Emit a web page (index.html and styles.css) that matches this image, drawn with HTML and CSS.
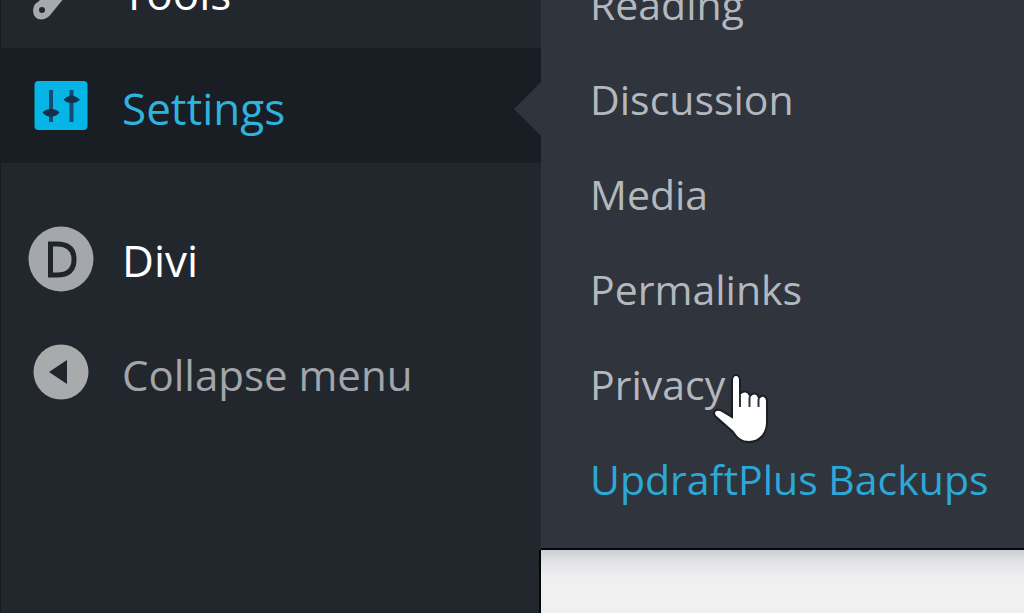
FILE: index.html
```html
<!DOCTYPE html>
<html lang="en">
<head>
<meta charset="utf-8">
<title>Settings</title>
<link rel="stylesheet" href="styles.css">
</head>
<body>
<div class="admin">
  <nav class="sidebar" aria-label="Main menu">
    <ul class="menu">
      <li><a class="menu-item" href="#">
        <svg class="icon" viewBox="0 0 70 70" aria-hidden="true"><path fill="#a7aaad" fill-rule="evenodd" d="M8 48Q5 57 12 61Q20 63 25 56L43 34L60 30L64 12L52 22L44 16L52 5L34 10L30 26L12 44Q9 45 8 48ZM19 52A3 3 0 1 0 13 52A3 3 0 1 0 19 52Z"/></svg>
        <span>Tools</span></a></li>
      <li><a class="menu-item current" href="#" aria-current="page">
        <svg class="icon" viewBox="0 0 70 70" aria-hidden="true"><rect x="8.500" y="8" width="53" height="49" rx="4" fill="#05b5e6"/><path stroke="#164a70" stroke-width="4" d="M25 17V49M45.500 17V49"/><path fill="#17304a" d="M16.500 39.500Q19 36 25 36T33.500 39.500Q31 43 25 44Q19 43 16.500 39.500ZM37.500 26.500Q40 24 45.500 22Q51 24 54 26.500Q51 30 45.500 30T37.500 26.500Z"/></svg>
        <span>Settings</span></a></li>
      <li class="separator" role="separator"></li>
      <li><a class="menu-item" href="#">
        <svg class="icon" viewBox="0 0 70 70" aria-hidden="true"><circle cx="35" cy="34" r="32.500" fill="#a4a8ae"/><path d="M24.500 19H31C42 19 48 24 48 34.500S42 50 31 50H24.500Z" fill="none" stroke="#20252c" stroke-width="5"/></svg>
        <span>Divi</span></a></li>
      <li><button class="menu-item collapse" type="button">
        <svg class="icon" viewBox="0 0 70 70" aria-hidden="true"><circle cx="35" cy="32" r="27.500" fill="#a9aaac"/><path d="M23 32L41 20V44Z" fill="#20252c"/></svg>
        <span>Collapse menu</span></button></li>
    </ul>
  </nav>
  <main class="content">
    <ul class="submenu">
      <li><a href="#">Reading</a></li>
      <li><a href="#">Discussion</a></li>
      <li><a href="#">Media</a></li>
      <li><a href="#">Permalinks</a></li>
      <li><a class="pointed" href="#">Privacy
        <svg class="cursor" viewBox="0 0 60 74" aria-hidden="true"><path d="M20 9C20 1 28 1 28 9V22C31 18 37 19 38 24C41 20 46 21 47 26C50 22 55 24 55 29V50C55 62 47 70 37 70C29 70 25 66 21 60L3 44C0 39 5 36 10 39L20 45Z" fill="#fff" stroke="#1b1e25" stroke-width="2"/><path d="M28 23V35M37.500 25V35M46.500 27V35" stroke="#30343c" stroke-width="2"/></svg></a></li>
      <li><a class="active" href="#">UpdraftPlus Backups</a></li>
    </ul>
    <div class="workspace"></div>
  </main>
</div>
</body>
</html>
```
FILE: styles.css
```css
* {
  box-sizing: border-box;
}

body {
  margin: 0;
  overflow: hidden;
  background: #f0f0f1;
  font-family: "Segoe UI", "Open Sans", "Noto Sans", sans-serif;
}

ul {
  margin: 0;
  padding: 0;
  list-style: none;
}

.admin {
  display: flex;
  height: 100vh;
  overflow: hidden;
}

.sidebar {
  flex: 0 0 541px;
  background: #22272e;
  border-left: 1px solid #191d23;
}

.menu {
  margin-top: -67px;
}

.menu-item {
  position: relative;
  display: flex;
  align-items: center;
  gap: 26px;
  width: 100%;
  height: 115px;
  padding: 4px 0 0 25px;
  border: 0;
  background: #22272e;
  color: #fff;
  font: inherit;
  font-size: 44px;
  line-height: 60px;
  text-align: left;
  text-decoration: none;
}

.icon {
  flex: none;
  width: 70px;
  height: 70px;
}

.menu-item.current {
  background: #191d24;
  color: #2eb3df;
}

.menu-item.current::after {
  content: "";
  position: absolute;
  top: 34px;
  right: 0;
  border: 27px solid transparent;
  border-right-color: #30343c;
  border-left-width: 0;
}

.menu-item.collapse {
  color: #a2a5a9;
  font-size: 42px;
}

.separator {
  height: 37px;
}

.content {
  display: flex;
  flex: 1;
  flex-direction: column;
  min-width: 0;
}

.submenu {
  flex: none;
  margin-top: -44px;
  padding-bottom: 22px;
  background: #30343c;
  border-bottom: 2px solid #050608;
}

.workspace {
  flex: 1;
  background: linear-gradient(#cdced3, #e2e3e5 12px, #f0f0f1 28px);
  box-shadow: -2px 0 #050608;
}

.submenu a {
  display: flex;
  align-items: center;
  height: 95px;
  padding-left: 49px;
  color: #b3b8be;
  font-size: 41px;
  line-height: 60px;
  text-decoration: none;
  white-space: nowrap;
}

.submenu .active {
  color: #2ba9d6;
}

.submenu .pointed {
  position: relative;
}

.cursor {
  position: absolute;
  top: 36px;
  left: 171px;
  width: 60px;
  height: 74px;
}
```
